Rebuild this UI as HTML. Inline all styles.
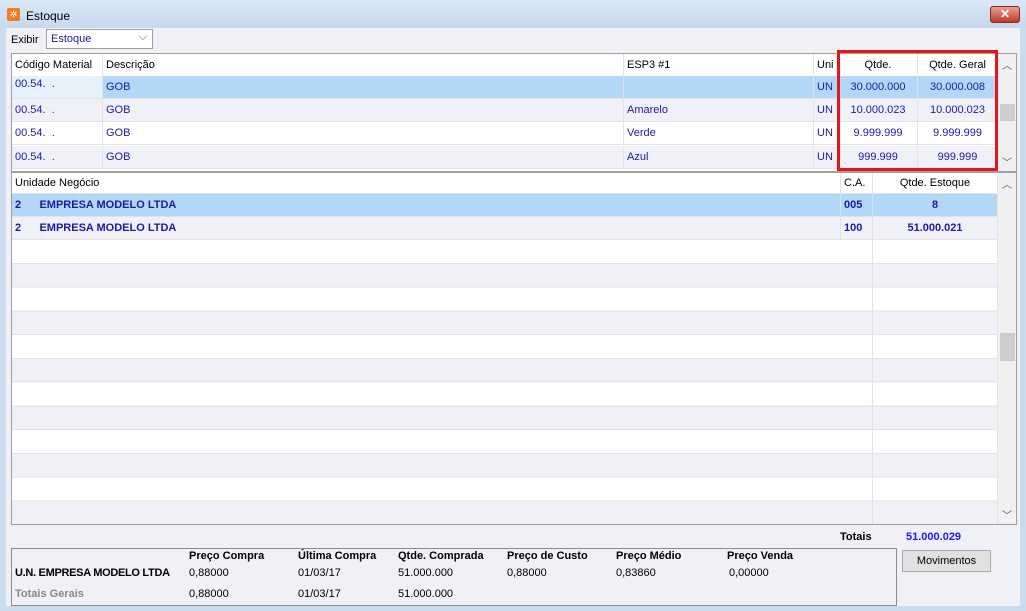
<!DOCTYPE html>
<html><head><meta charset="utf-8"><style>
*{margin:0;padding:0;box-sizing:border-box}
body{width:1026px;height:611px;overflow:hidden;background:#c9dcf0;font-family:"Liberation Sans",sans-serif;font-size:11px;color:#000;position:relative}
.a{position:absolute}
#title{left:0;top:0;width:1026px;height:28px;background:linear-gradient(#dbe8f6,#c6d9ef)}
#client{left:6px;top:28px;width:1014px;height:578px;background:#f0f0f7}
.grid{background:#fff;border:1px solid #a0a0a0}
.row{position:absolute;left:0;height:23px;border-bottom:1px solid #e2e2e8}
.cell{position:absolute;top:0;height:100%;line-height:22px;border-right:1px solid #e2e2e8;padding-left:3px;white-space:nowrap;overflow:hidden}
.blue{color:#1a1aa6}
.r{text-align:center;padding-left:0}
.g{background:#f0f1f7}.s{background:#b3d7f7}
.sb{position:absolute;background:#f0f0f0}
.b{font-weight:bold}
</style></head><body>
<div class="a" id="title"></div>
<div class="a" style="left:7px;top:8px;width:13px;height:13px;background:#f47a20;border-radius:2px;color:#fff;font-size:9px;line-height:13px;text-align:center">✲</div>
<div class="a" style="left:26px;top:9px;font-size:12px">Estoque</div>
<div class="a" style="left:990px;top:6px;width:30px;height:17px;background:linear-gradient(#e8a090,#c0392b);border:1px solid #8b2a1e;border-radius:3px;color:#fff;font-weight:bold;text-align:center;line-height:15px;font-size:12px">✕</div>
<div class="a" id="client"></div>
<div class="a" style="left:11px;top:34px">Exibir</div>
<div class="a" style="left:46px;top:29px;width:107px;height:20px;background:#fff;border:1px solid #a0a0a0;color:#1a1aa6;padding:3px 0 0 4px">Estoque<span class="a" style="right:5px;top:1px;color:#555;font-size:11px">⌵</span></div>

<!-- top grid -->
<div class="a grid" style="left:11px;top:53px;width:1006px;height:119px;overflow:hidden">
 <div class="row" style="top:0;width:986px;background:#fff"><div class="cell" style="left:0;width:91px">Código Material</div><div class="cell" style="left:91px;width:521px">Descrição</div><div class="cell" style="left:612px;width:190px">ESP3 #1</div><div class="cell" style="left:802px;width:25px">Uni</div><div class="cell r" style="left:827px;width:79px">Qtde.</div><div class="cell r" style="left:906px;width:80px">Qtde. Geral</div></div>
 <div class="row s blue" style="top:22px;width:986px"><div class="cell" style="left:0;width:91px;background:#e5f1fb;line-height:16px">00.54. &nbsp;.</div><div class="cell" style="left:91px;width:521px">GOB</div><div class="cell" style="left:612px;width:190px"></div><div class="cell" style="left:802px;width:25px">UN</div><div class="cell r" style="left:827px;width:79px">30.000.000</div><div class="cell r" style="left:906px;width:80px">30.000.008</div></div>
 <div class="row g blue" style="top:45px;width:986px"><div class="cell" style="left:0;width:91px">00.54. &nbsp;.</div><div class="cell" style="left:91px;width:521px">GOB</div><div class="cell" style="left:612px;width:190px">Amarelo</div><div class="cell" style="left:802px;width:25px">UN</div><div class="cell r" style="left:827px;width:79px">10.000.023</div><div class="cell r" style="left:906px;width:80px">10.000.023</div></div>
 <div class="row blue" style="top:68px;width:986px;background:#fff"><div class="cell" style="left:0;width:91px">00.54. &nbsp;.</div><div class="cell" style="left:91px;width:521px">GOB</div><div class="cell" style="left:612px;width:190px">Verde</div><div class="cell" style="left:802px;width:25px">UN</div><div class="cell r" style="left:827px;width:79px">9.999.999</div><div class="cell r" style="left:906px;width:80px">9.999.999</div></div>
 <div class="row g blue" style="top:92px;width:986px"><div class="cell" style="left:0;width:91px">00.54. &nbsp;.</div><div class="cell" style="left:91px;width:521px">GOB</div><div class="cell" style="left:612px;width:190px">Azul</div><div class="cell" style="left:802px;width:25px">UN</div><div class="cell r" style="left:827px;width:79px">999.999</div><div class="cell r" style="left:906px;width:80px">999.999</div></div>
 <div class="sb" style="left:986px;top:0;width:19px;height:118px"></div>
 <div class="a" style="left:990px;top:3px;color:#555;font-size:10px">︿</div>
 <div class="a" style="left:988px;top:50px;width:15px;height:17px;background:#cdcdcd"></div>
 <div class="a" style="left:990px;top:100px;color:#555;font-size:10px">﹀</div>
</div>
<div class="a" style="left:837px;top:50px;width:161px;height:121px;border:3px solid #e8131b"></div>

<!-- bottom grid -->
<div class="a grid" style="left:11px;top:172px;width:1006px;height:353px;overflow:hidden">
 <div class="row" style="top:0;width:986px;height:21px;background:#fff"><div class="cell" style="left:0;width:829px;line-height:20px">Unidade Negócio</div><div class="cell" style="left:829px;width:32px;line-height:20px">C.A.</div><div class="cell r" style="left:861px;width:125px;line-height:20px">Qtde. Estoque</div></div>
 <div class="row s blue b" style="top:21px;width:986px"><div class="cell" style="left:0;width:829px">2 &nbsp;&nbsp;&nbsp;&nbsp;&nbsp;EMPRESA MODELO LTDA</div><div class="cell" style="left:829px;width:32px">005</div><div class="cell r" style="left:861px;width:125px">8</div></div>
 <div class="row g blue b" style="top:44px;width:986px"><div class="cell" style="left:0;width:829px">2 &nbsp;&nbsp;&nbsp;&nbsp;&nbsp;EMPRESA MODELO LTDA</div><div class="cell" style="left:829px;width:32px">100</div><div class="cell r" style="left:861px;width:125px">51.000.021</div></div>
 <div class="row" style="top:67px;width:986px;height:286px;background:repeating-linear-gradient(#fff 0 23px,#e2e2e8 23px 24px,#f0f1f7 24px 46.5px,#e2e2e8 46.5px 47.5px)"><div class="cell" style="left:829px;width:32px"></div><div class="cell" style="left:861px;width:125px"></div></div>
 <div class="sb" style="left:986px;top:0;width:19px;height:352px"></div>
 <div class="a" style="left:990px;top:3px;color:#555;font-size:10px">︿</div>
 <div class="a" style="left:988px;top:160px;width:15px;height:28px;background:#cdcdcd"></div>
 <div class="a" style="left:990px;top:334px;color:#555;font-size:10px">﹀</div>
</div>

<div class="a b" style="left:840px;top:531px">Totais</div>
<div class="a b" style="left:906px;top:531px;color:#1a1aff">51.000.029</div>
<div class="a" style="left:11px;top:548px;width:886px;height:58px;border:1px solid #8c8c8c"></div>
<div class="a" style="left:902px;top:550px;width:89px;height:22px;border:1px solid #adadad;background:#e1e1e1;text-align:center;line-height:20px">Movimentos</div>
<div class="a b" style="top:550px;left:189px">Preço Compra</div>
<div class="a b" style="top:550px;left:298px">Última Compra</div>
<div class="a b" style="top:550px;left:398px">Qtde. Comprada</div>
<div class="a b" style="top:550px;left:507px">Preço de Custo</div>
<div class="a b" style="top:550px;left:616px">Preço Médio</div>
<div class="a b" style="top:550px;left:727px">Preço Venda</div>
<div class="a b" style="top:567px;left:15px;letter-spacing:-0.3px">U.N. EMPRESA MODELO LTDA</div>
<div class="a" style="top:567px;left:189px">0,88000</div>
<div class="a" style="top:567px;left:298px">01/03/17</div>
<div class="a" style="top:567px;left:398px">51.000.000</div>
<div class="a" style="top:567px;left:507px">0,88000</div>
<div class="a" style="top:567px;left:616px">0,83860</div>
<div class="a" style="top:567px;left:729px">0,00000</div>
<div class="a b" style="top:588px;left:15px;color:#888">Totais Gerais</div>
<div class="a" style="top:588px;left:189px">0,88000</div>
<div class="a" style="top:588px;left:298px">01/03/17</div>
<div class="a" style="top:588px;left:398px">51.000.000</div>
</body></html>
